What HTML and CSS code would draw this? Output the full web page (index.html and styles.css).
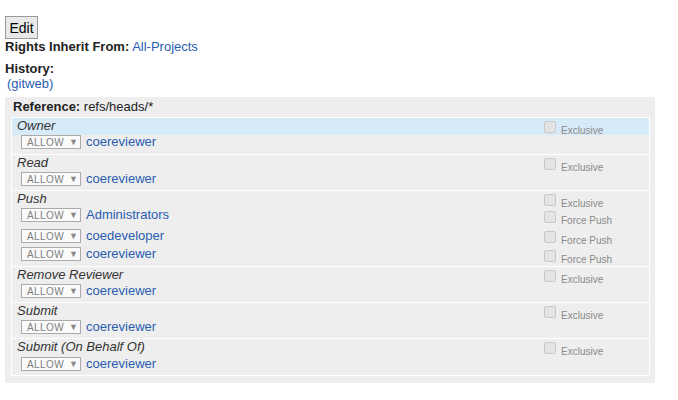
FILE: index.html
```html
<!DOCTYPE html>
<html>
<head>
<meta charset="utf-8">
<link rel="stylesheet" href="styles.css">
</head>
<body>
<div class="page">
  <button class="edit-btn">Edit</button>
  <div class="info-line"><b>Rights Inherit From:</b> <a class="lnk" href="#">All-Projects</a></div>
  <div class="history-label"><b>History:</b></div>
  <div class="gitweb"><a class="lnk" href="#">(gitweb)</a></div>

  <div class="ref-box">
    <div class="ref-head"><b>Reference:</b> refs/heads/*</div>
    <div class="sections">
      <div class="section">
        <div class="title hl">Owner</div>
        <div class="opt hl"><span class="cb"></span><span class="opt-label">Exclusive</span></div>
        <div class="rule first"><span class="sel">ALLOW <span class="arr">▼</span></span><a class="lnk" href="#">coereviewer</a></div>
        <div class="opt-empty"></div>
      </div>
      <div class="section">
        <div class="title">Read</div>
        <div class="opt"><span class="cb"></span><span class="opt-label">Exclusive</span></div>
        <div class="rule"><span class="sel">ALLOW <span class="arr">▼</span></span><a class="lnk" href="#">coereviewer</a></div>
        <div class="opt-empty"></div>
      </div>
      <div class="section">
        <div class="title">Push</div>
        <div class="opt"><span class="cb"></span><span class="opt-label">Exclusive</span></div>
        <div class="rule r1"><span class="sel">ALLOW <span class="arr">▼</span></span><a class="lnk" href="#">Administrators</a></div>
        <div class="ropt r1"><span class="cb"></span><span class="opt-label">Force Push</span></div>
        <div class="rule r2"><span class="sel">ALLOW <span class="arr">▼</span></span><a class="lnk" href="#">coedeveloper</a></div>
        <div class="ropt r2"><span class="cb"></span><span class="opt-label">Force Push</span></div>
        <div class="rule r3"><span class="sel">ALLOW <span class="arr">▼</span></span><a class="lnk" href="#">coereviewer</a></div>
        <div class="ropt r3"><span class="cb"></span><span class="opt-label">Force Push</span></div>
      </div>
      <div class="section">
        <div class="title">Remove Reviewer</div>
        <div class="opt"><span class="cb"></span><span class="opt-label">Exclusive</span></div>
        <div class="rule"><span class="sel">ALLOW <span class="arr">▼</span></span><a class="lnk" href="#">coereviewer</a></div>
        <div class="opt-empty"></div>
      </div>
      <div class="section">
        <div class="title">Submit</div>
        <div class="opt"><span class="cb"></span><span class="opt-label">Exclusive</span></div>
        <div class="rule"><span class="sel">ALLOW <span class="arr">▼</span></span><a class="lnk" href="#">coereviewer</a></div>
        <div class="opt-empty"></div>
      </div>
      <div class="section">
        <div class="title">Submit (On Behalf Of)</div>
        <div class="opt"><span class="cb"></span><span class="opt-label">Exclusive</span></div>
        <div class="rule last"><span class="sel">ALLOW <span class="arr">▼</span></span><a class="lnk" href="#">coereviewer</a></div>
        <div class="opt-empty"></div>
      </div>
    </div>
  </div>
</div>
</body>
</html>
```
FILE: styles.css
```css
html, body {
  margin: 0;
  padding: 0;
  background: #fff;
}
body {
  font-family: "Liberation Sans", Arial, sans-serif;
  font-size: 13px;
  color: #222;
}
.page {
  padding: 16px 0 0 5px;
}
.edit-btn {
  display: block;
  width: 33px;
  height: 23px;
  padding: 0;
  margin: 0;
  font-family: "Liberation Sans", Arial, sans-serif;
  font-size: 14px;
  color: #000;
  background: #e9e9e9;
  border: 1px solid #9a9a9a;
  border-radius: 0;
}
.info-line {
  line-height: 15px;
  margin-top: 0;
}
.lnk {
  color: #2a5db0;
  text-decoration: none;
}
.history-label {
  margin-top: 7px;
  line-height: 15px;
}
.gitweb {
  line-height: 15px;
  padding-left: 2px;
}
.ref-box {
  margin-top: 6px;
  width: 639px;
  background: #eeeeee;
  padding: 0 5px 7px 6px;
}
.ref-head {
  padding: 3px 2px 4px 2px;
  line-height: 13px;
}
.sections {
  border-left: 1px solid #fff;
  border-right: 1px solid #fff;
  border-bottom: 1px solid #fff;
}
.section {
  display: grid;
  grid-template-columns: 532px 1fr;
  border-top: 1px solid #fff;
}
.title {
  height: 17px;
  line-height: 15px;
  padding-left: 5px;
  font-style: italic;
  color: #333;
}
.hl {
  background: #d7eaf8;
}
.opt, .ropt {
  display: flex;
  align-items: flex-end;
  height: 17px;
  box-sizing: border-box;
}
.opt {
  padding-top: 3px;
}
.cb {
  display: inline-block;
  width: 10px;
  height: 10px;
  border: 1px solid #c8c8c8;
  border-radius: 2px;
  background: #e4e4e4;
  align-self: flex-start;
}
.opt-label {
  font-size: 10px;
  color: #8a8a8a;
  margin-left: 5px;
  line-height: 10px;
  margin-bottom: -1px;
}
.rule {
  height: 18px;
  display: flex;
  align-items: flex-start;
  padding-left: 9px;
  box-sizing: border-box;
}
.rule.first { height: 19px; }
.rule.last { height: 19px; padding-top: 1px; }
.rule.r1 { height: 21px; }
.rule.r2 { height: 18px; }
.rule.r3 { height: 19px; }
.ropt.r1 { height: 21px; padding-top: 3px; align-items: flex-start; }
.ropt.r2 { height: 18px; padding-top: 2px; align-items: flex-start; }
.ropt.r3 { height: 19px; padding-top: 3px; align-items: flex-start; }
.ropt .opt-label { margin-top: 5px; }
.sel {
  display: inline-flex;
  align-items: center;
  box-sizing: border-box;
  width: 60px;
  height: 14px;
  border: 1px solid #aaa;
  background: #fafafa;
  font-size: 10px;
  color: #808080;
  padding-left: 5px;
  margin-right: 5px;
  letter-spacing: 0.4px;
}
.rule .lnk {
  line-height: 14px;
}
.arr {
  font-size: 9px;
  color: #888;
  margin-left: 5px;
}
```
